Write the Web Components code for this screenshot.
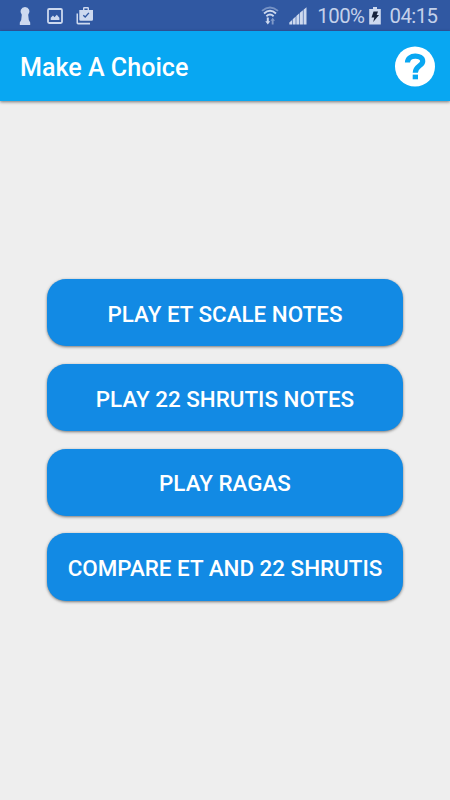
<!DOCTYPE html>
<html lang="en">
<head>
<meta charset="utf-8">
<meta name="viewport" content="width=device-width, initial-scale=1">
<title>Make A Choice</title>
<style>
    body {
        margin: 0;
        background: #eeeeee;
        font-family: Roboto, "Liberation Sans", sans-serif;
    }
</style>
</head>
<body>
<choice-screen></choice-screen>

<script>
const statusTemplate = document.createElement('template');
statusTemplate.innerHTML = `
    <style>
    :host {
        display: flex;
        align-items: center;
        justify-content: space-between;
        box-sizing: border-box;
        height: 31px;
        padding: 1px 12.5px 0 19px;
        background: #3058a2;
        color: #c4d1ea;
        font-size: 20.4px;
        line-height: 30px;
        letter-spacing: -.55px;
    }
    .group { display: flex; align-items: center; }
    svg { display: block; fill: #cdd9ef; }
    .left { gap: 16px; }
    .case { margin-left: -3px; }
    .wifi { margin-right: 10px; }
    .signal { margin-right: 10.500px; }
    .battery { margin: 0 8px 0 5px; }
    </style>
    <div class="group left">
        <svg width="12" height="20" viewBox="0 0 12 20">
            <path d="M6 1A4.600 4.600 0 0 1 9.200 8.800L9.800 14 11.200 16.500V19H0.800V16.500L2.200 14 2.800 8.800A4.600 4.600 0 0 1 6 1z"/>
        </svg>
        <svg width="16" height="18" viewBox="0 0 16 18">
            <rect x="1" y="2" width="14" height="14" rx="1.2" fill="none" stroke="#cdd9ef" stroke-width="1.8"/>
            <path d="M3.700 13V10.800L6 8.600 7.500 10.200 9.800 7.700 12.400 10.700V13z"/>
        </svg>
        <svg class="case" width="18" height="20" viewBox="0 0 18 20">
            <path d="M0.500 7.500H2V16.700H14V18.400H2Q0.500 18.400 0.500 17z"/>
            <path fill-rule="evenodd" d="M7 4V2.300Q7 1 8.300 1H11.700Q13 1 13 2.300V4H17V13.500Q17 14.800 15.700 14.800H4.500Q3.300 14.800 3.300 13.500V4zM8.400 4H11.600V2.400H8.400z"/>
            <path d="M7.300 9.200L9.200 11 12.900 6.900" fill="none" stroke="#3058a2" stroke-width="1.400"/>
        </svg>
    </div>
    <div class="group">
        <svg class="wifi" width="18" height="20" viewBox="0 0 18 20">
            <g fill="none" stroke="#cdd9ef" stroke-width="1.900">
                <path d="M1 4.900Q9-2 17 4.900" opacity=".45"/>
                <path d="M3 7.500Q9 2.200 15 7.500"/>
                <path d="M5.400 10.200Q9 7 12.600 10.200"/>
            </g>
            <path d="M5.800 11.600H7.800V15.300H9.300L6.800 18.500 4.300 15.300H5.800z"/>
            <path d="M10.700 18.400V14.800H9.400L11.700 11.700 14 14.800H12.600V18.400z" opacity=".5"/>
        </svg>
        <svg class="signal" width="18" height="18" viewBox="0 0 18 18">
            <path d="M0.300 15.500L3.100 12.900V17.500H0.300zM3.700 12.300L6.700 9.600V17.500H3.700zM7.300 9.100L10.300 6.300V17.500H7.300zM10.900 5.800L13.900 3.200V17.500H10.900zM14.500 2.700L17.500 0.200V17.500H14.500z"/>
        </svg>
        <span>100%</span>
        <svg class="battery" width="12" height="18" viewBox="0 0 12 18">
            <path d="M4 0H8V2H11.800V17.500H0.200V2H4z"/>
            <path d="M4.500 4.500H9L7.700 8H10L4.200 15 5.300 10.500H2.500z" fill="#17233c"/>
        </svg>
        <span>04:15</span>
    </div>
`;

class StatusBar extends HTMLElement {
    constructor() {
        super();
        this.attachShadow({ mode: "open" });
        this.shadowRoot.appendChild(statusTemplate.content.cloneNode(true));
    }
}
customElements.define("status-bar", StatusBar);

const barTemplate = document.createElement('template');
barTemplate.innerHTML = `
    <style>
    :host {
        display: flex;
        align-items: center;
        justify-content: space-between;
        box-sizing: border-box;
        height: 70px;
        padding: 1px 15px 0 20px;
        background: #08a7f2;
        color: #fff;
        font-size: 25.1px;
        font-weight: 500;
        line-height: 32px;
        box-shadow: 0 1px 3px rgba(0, 0, 0, .5);
    }
    ::slotted(span) { padding-top: 2px; }
    </style>
    <slot></slot>
    <slot name="action"></slot>
`;

class AppBar extends HTMLElement {
    constructor() {
        super();
        this.attachShadow({ mode: "open" });
        this.shadowRoot.appendChild(barTemplate.content.cloneNode(true));
    }
}
customElements.define("app-bar", AppBar);

const helpTemplate = document.createElement('template');
helpTemplate.innerHTML = `
    <style>
    :host { display: block; cursor: pointer; }
    svg { display: block; }
    </style>
    <svg width="40" height="41" viewBox="0 0 40 41">
        <circle cx="20" cy="20.500" r="20" fill="#fff"/>
        <path d="M12.500 16.500C12.500 8.200 27.700 8.300 27.700 15.200C27.700 20 20.300 19.800 20.300 26.700" fill="none" stroke="#08a7f2" stroke-width="5.200"/>
        <rect x="17.700" y="28.600" width="5.300" height="4.700" fill="#08a7f2"/>
    </svg>
`;

class HelpButton extends HTMLElement {
    constructor() {
        super();
        this.attachShadow({ mode: "open" });
        this.shadowRoot.appendChild(helpTemplate.content.cloneNode(true));
    }
}
customElements.define("help-button", HelpButton);

const buttonTemplate = document.createElement('template');
buttonTemplate.innerHTML = `
    <style>
    :host { display: block; }
    button {
        display: block;
        width: 100%;
        height: 67.500px;
        padding: 2px 0 0;
        border: 0;
        border-radius: 19px;
        background: #128ae4;
        box-shadow: 0 1px 3px rgba(0, 0, 0, .5);
        color: #fff;
        font: 500 22.400px Roboto, "Liberation Sans", sans-serif;
        text-transform: uppercase;
        white-space: nowrap;
        cursor: pointer;
    }
    </style>
    <button><slot></slot></button>
`;

class ChoiceButton extends HTMLElement {
    constructor() {
        super();
        this.attachShadow({ mode: "open" });
        this.shadowRoot.appendChild(buttonTemplate.content.cloneNode(true));
    }
}
customElements.define("choice-button", ChoiceButton);

const screenTemplate = document.createElement('template');
screenTemplate.innerHTML = `
    <style>
    :host {
        display: flex;
        flex-direction: column;
        height: 100vh;
        overflow: hidden;
    }
    main {
        flex: 1;
        display: flex;
        flex-direction: column;
        justify-content: center;
        gap: 17.300px;
        padding: 0 47px 21.200px;
    }
    </style>
    <status-bar></status-bar>
    <app-bar>
        <span>Make A Choice</span>
        <help-button slot="action"></help-button>
    </app-bar>
    <main>
        <choice-button>PLAY ET SCALE NOTES</choice-button>
        <choice-button>PLAY 22 SHRUTIS NOTES</choice-button>
        <choice-button>PLAY RAGAS</choice-button>
        <choice-button>COMPARE ET AND 22 SHRUTIS</choice-button>
    </main>
`;

class ChoiceScreen extends HTMLElement {
    constructor() {
        super();
        this.attachShadow({ mode: "open" });
        this.shadowRoot.appendChild(screenTemplate.content.cloneNode(true));
    }
}
customElements.define("choice-screen", ChoiceScreen);
</script>
</body>
</html>
